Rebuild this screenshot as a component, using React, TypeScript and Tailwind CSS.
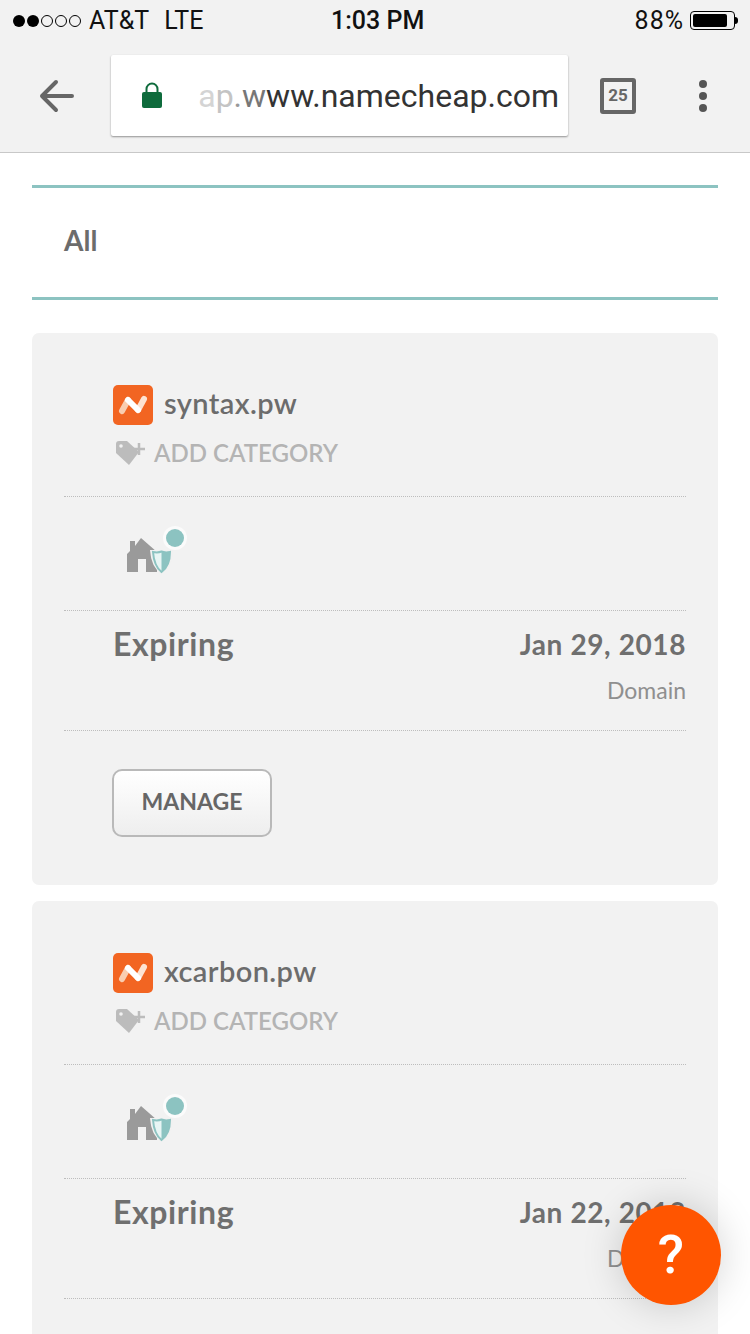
import React from 'react';

function LogoIcon() {
  return (
    <div className="flex h-[40px] w-[40px] items-center justify-center rounded-[5px] bg-[#f26522]">
      <svg width="30" height="20" viewBox="0 0 30 20">
        <path d="M4 16 L10 5" fill="none" stroke="#f9cdb0" strokeWidth="6" strokeLinecap="round" />
        <path d="M20 15 L26 4" fill="none" stroke="#fde3d2" strokeWidth="6" strokeLinecap="round" />
        <path d="M10 5 L20 15" fill="none" stroke="#ffffff" strokeWidth="6" strokeLinecap="round" />
      </svg>
    </div>
  );
}

function TagPlus() {
  return (
    <svg width="36" height="28" viewBox="0 0 36 28" className="shrink-0">
      <path d="M3 5 Q3 2 6 2 L14 2 L26 13 L16 26 L3 14 Z" fill="#bcbcbc" />
      <circle cx="8" cy="7" r="1.800" fill="#f1f1f1" />
      <path d="M26 4 V16 M20 10 H32" stroke="#bcbcbc" strokeWidth="2.500" />
    </svg>
  );
}

function HouseShield() {
  return (
    <svg width="64" height="48" viewBox="0 0 64 48" className="overflow-visible">
      <path d="M2 26 L5 23 L5 13 L10 13 L10 18 L16 10 L32 24 L32 44 L21 44 L21 31 L13 31 L13 44 L2 44 Z" fill="#9a9a9a" />
      <path d="M25 22 L48 22 Q48 39 36.500 46 Q26 39 25 22 Z" fill="#f1f1f1" />
      <path d="M28 24 Q33 25 36.500 23.500 Q40 25 45 24 Q45 38 36.500 44 Q29 38 28 24 Z" fill="#e8f5f4" stroke="#8cc3c1" strokeWidth="2" />
      <path d="M36.500 23.500 Q40 25 45 24 Q45 38 36.500 44 Z" fill="#8cc3c1" />
      <circle cx="50" cy="10" r="12" fill="#fbfbfb" />
      <circle cx="50" cy="10" r="9" fill="#8cc3c1" />
    </svg>
  );
}

function DomainCard({ name, date }: { name: string; date: string }) {
  return (
    <div className="rounded-[7px] bg-[#f2f2f2] px-[32px]">
      <div className="h-[164px] border-b border-dotted border-[#bdbdbd] pl-[49px] pt-[52px]">
        <div className="flex h-[40px] items-center gap-[11px]">
          <LogoIcon />
          <span className="mb-[4px] text-[29px] font-semibold tracking-[0.4px] text-[#6c6c6c]">{name}</span>
        </div>
        <div className="mt-[14px] flex h-[28px] items-center">
          <TagPlus />
          <span className="ml-[5px] text-[24px] font-semibold text-[#b4b4b4]">ADD CATEGORY</span>
        </div>
      </div>
      <div className="h-[114px] border-b border-dotted border-[#bdbdbd] pl-[61px] pt-[31px]">
        <HouseShield />
      </div>
      <div className="flex h-[120px] justify-between border-b border-dotted border-[#bdbdbd] pl-[49px]">
        <span className="mt-[13px] text-[32px] font-bold leading-[40px] tracking-[0.6px] text-[#6f6f6f]">Expiring</span>
        <div className="text-right">
          <div className="mt-[15px] text-[28px] font-bold leading-[36px] tracking-[0.6px] text-[#6f6f6f]">{date}</div>
          <div className="mt-[14px] text-[23px] leading-[28px] text-[#8f8f8f]">Domain</div>
        </div>
      </div>
      <div className="h-[154px] pl-[48px] pt-[38px]">
        <button className="h-[68px] w-[160px] rounded-[10px] border-2 border-[#b9b9b9] bg-gradient-to-b from-white to-[#eeeeee] pb-[3px] text-[23px] font-bold text-[#666666]">
          MANAGE
        </button>
      </div>
    </div>
  );
}

export default function App() {
  return (
    <div className="relative flex h-[1334px] w-[750px] flex-col overflow-hidden bg-white font-['Lato',sans-serif]">
      <header className="h-[153px] shrink-0 border-b border-[#c8c8c8] bg-[#f2f2f2] font-['Roboto',sans-serif]">
        <div className="relative flex h-[40px] items-center pl-[13px] pr-[12px] pt-[1px] text-[25px] text-[#111111]">
          <div className="flex items-center gap-[2px]">
            <span className="h-[12px] w-[12px] rounded-full bg-black" />
            <span className="h-[12px] w-[12px] rounded-full bg-black" />
            <span className="h-[12px] w-[12px] rounded-full border border-black" />
            <span className="h-[12px] w-[12px] rounded-full border border-black" />
            <span className="h-[12px] w-[12px] rounded-full border border-black" />
          </div>
          <span className="ml-[8px]">AT&amp;T</span>
          <span className="ml-[15px]">LTE</span>
          <span className="absolute left-[331px] font-medium">1:03 PM</span>
          <span className="ml-auto tracking-[1px]">88%</span>
          <div className="ml-[6px] flex items-center">
            <div className="h-[19px] w-[45px] rounded-[4px] border border-black p-[2px]">
              <div className="h-full w-[88%] rounded-[2px] bg-black" />
            </div>
            <div className="h-[7px] w-[3px] rounded-r-full bg-black" />
          </div>
        </div>
        <div className="flex h-[112px] items-start">
          <div className="flex h-[112px] w-[111px] shrink-0 items-center justify-center pl-[3px]">
            <svg width="36" height="34" viewBox="0 0 36 34" fill="none" stroke="#666666" strokeWidth="4" strokeLinecap="round" strokeLinejoin="round">
              <path d="M33 17 H3 M17 3 L3 17 L17 31" />
            </svg>
          </div>
          <div className="mt-[15px] flex h-[81px] w-[457px] shrink-0 items-center rounded-[2px] bg-white pl-[30px] pr-[9px] shadow-[0_1px_2px_rgba(0,0,0,0.4)]">
            <svg width="22" height="27" viewBox="0 0 22 27" className="shrink-0">
              <path d="M5.500 12 V7 a5.500 5.500 0 0 1 11 0 V12" fill="none" stroke="#0e6b3c" strokeWidth="2" />
              <rect x="1" y="10" width="20" height="16" rx="2" fill="#0e6b3c" />
            </svg>
            <span className="ml-auto whitespace-nowrap text-[32px] text-[#333333]">
              <span className="text-[#d4d4d4]">a</span>
              <span className="text-[#c4c4c4]">p</span>
              <span className="text-[#999999]">.</span>
              <span className="text-[#777777]">w</span>ww.namecheap.com
            </span>
          </div>
          <div className="flex h-[112px] w-[100px] shrink-0 items-center justify-center">
            <div className="flex h-[36px] w-[36px] items-center justify-center rounded-[3px] border-[4px] border-[#666666] text-[17px] font-bold text-[#666666]">
              25
            </div>
          </div>
          <div className="flex h-[112px] w-[70px] shrink-0 flex-col items-center justify-center gap-[4px]">
            <span className="h-[8px] w-[8px] rounded-full bg-[#555555]" />
            <span className="h-[8px] w-[8px] rounded-full bg-[#555555]" />
            <span className="h-[8px] w-[8px] rounded-full bg-[#555555]" />
          </div>
        </div>
      </header>

      <main className="px-[32px] pt-[32px]">
        <div className="flex h-[115px] items-center border-y-[3px] border-[#8cc3c1] pb-[6px] pl-[32px] text-[28px] font-bold text-[#6c6c6c]">
          All
        </div>
        <div className="mt-[33px] flex flex-col gap-[16px]">
          <DomainCard name="syntax.pw" date="Jan 29, 2018" />
          <DomainCard name="xcarbon.pw" date="Jan 22, 2018" />
        </div>
      </main>

      <button className="absolute left-[621px] top-[1205px] flex h-[100px] w-[100px] items-center justify-center rounded-full bg-[#ff5500] pb-[2px] font-['Roboto',sans-serif] text-[54px] font-medium text-white shadow-[0_0_40px_rgba(0,0,0,0.18)]">
        ?
      </button>
    </div>
  );
}
